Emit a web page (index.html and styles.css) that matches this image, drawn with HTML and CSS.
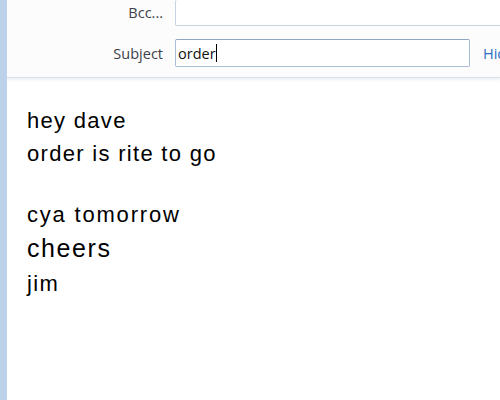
FILE: index.html
```html
<!DOCTYPE html>
<html>
<head>
<meta charset="utf-8">
<link rel="stylesheet" href="styles.css">
</head>
<body>
<div class="app">
  <div class="strip"></div>
  <div class="main">
    <div class="header">
      <div class="row row-bcc">
        <label class="label">Bcc...</label>
        <div class="field field-bcc"></div>
      </div>
      <div class="row row-subject">
        <label class="label">Subject</label>
        <div class="field field-subject"><span>order</span><span class="caret"></span></div>
        <a class="hide">Hide</a>
      </div>
    </div>
    <div class="body">
      <div class="line">hey dave</div>
      <div class="line">order is rite to go</div>
      <div class="blank"></div>
      <div class="line wide">cya tomorrow</div>
      <div class="line big">cheers</div>
      <div class="line last">jim</div>
    </div>
  </div>
</div>
</body>
</html>
```
FILE: styles.css
```css
html, body {
  margin: 0;
  padding: 0;
  background: #ffffff;
}
.app {
  display: flex;
  width: 500px;
  height: 400px;
  overflow: hidden;
}
.strip {
  width: 7px;
  flex: none;
  background: #bdd2ea;
}
.main {
  flex: 1;
  min-width: 0;
  overflow: hidden;
  display: flex;
  flex-direction: column;
}
.header {
  background: #fcfcfd;
  border-bottom: 1px solid #d9e2ec;
  box-shadow: 0 2px 3px rgba(200, 210, 225, 0.35);
  padding-bottom: 10px;
  display: flex;
  flex-direction: column;
  gap: 13px;
}
.row {
  display: flex;
  align-items: center;
  gap: 12px;
  white-space: nowrap;
}
.label {
  width: 156px;
  flex: none;
  text-align: right;
  font-family: "Open Sans", "Noto Sans", sans-serif;
  font-size: 14.5px;
  color: #3c4148;
}
.row-bcc .label {
  position: relative;
  top: -1px;
}
.field {
  box-sizing: border-box;
  background: #ffffff;
  border: 1px solid #c6d3e2;
  border-radius: 2px;
  flex: none;
}
.field-bcc {
  width: 340px;
  height: 26px;
  border-top: none;
}
.field-subject {
  width: 295px;
  height: 28px;
  border-color: #a8bed8;
  border-top-color: #8fa6c2;
  display: flex;
  align-items: center;
  padding-left: 2px;
  font-family: "Open Sans", "Noto Sans", sans-serif;
  font-size: 14.5px;
  color: #111;
}
.caret {
  display: inline-block;
  width: 1px;
  height: 18px;
  background: #000;
}
.hide {
  margin-left: 1px;
  font-family: "Open Sans", "Noto Sans", sans-serif;
  font-size: 14.5px;
  color: #2e6fc7;
}
.body {
  padding-top: 26px;
  padding-left: 20px;
  font-family: "Liberation Sans", Arial, sans-serif;
  font-size: 22px;
  letter-spacing: 1.3px;
  color: #000;
}
.line {
  line-height: 33px;
  height: 33px;
}
.blank {
  height: 28px;
}
.wide {
  letter-spacing: 1.8px;
}
.big {
  font-size: 25px;
  letter-spacing: 1.6px;
  line-height: 35px;
  height: 35px;
}
.last {
  line-height: 36px;
  height: 36px;
}
```
